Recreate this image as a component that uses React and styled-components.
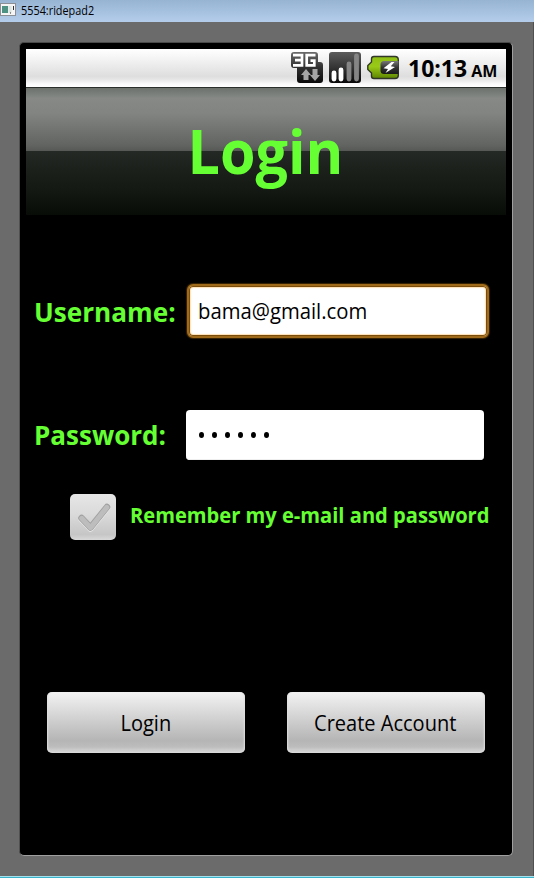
import React from 'react';
import styled, { createGlobalStyle } from 'styled-components';

const Global = createGlobalStyle`
  * { box-sizing: border-box; }
  body { margin: 0; background: #6b6b6b; font-family: "Open Sans", sans-serif; }
`;

const Window = styled.div`
  width: 534px;
  height: 878px;
  display: flex;
  flex-direction: column;
  background: #6b6b6b;
  overflow: hidden;
`;

const TitleBar = styled.header`
  height: 22px;
  flex: none;
  display: flex;
  align-items: flex-start;
  gap: 5px;
  background: linear-gradient(#98b4d3, #a8c3e2 60%, #b4cdea);
`;

const Desk = styled.div`
  height: 854px;
  flex: none;
  padding: 20px 20px 0 19px;
  border-right: 1px solid #505050;
`;

const BottomEdge = styled.div`
  height: 2px;
  background: linear-gradient(#a5e2ee 50%, #3bb3cb 50%);
`;

const Device = styled.main`
  height: 814px;
  padding: 6px;
  background: #000;
  border: 1px solid #a0a0a0;
  border-top-color: #4a4a4a;
  border-left-color: #505050;
  border-radius: 5px;
`;

/* Condensed line of text; $x is the horizontal scale. */
const Text = styled.span`
  display: block;
  white-space: pre;
  font-size: ${p => p.$size}px;
  font-weight: ${p => (p.$bold ? 700 : 400)};
  line-height: ${p => p.$line || 30}px;
  color: ${p => p.$color || '#000'};
  transform: scaleX(${p => p.$x || 1});
  transform-origin: ${p => p.$origin || 'left'} center;
`;

const StatusBar = styled.div`
  height: 39px;
  display: flex;
  align-items: center;
  padding: 0 9px 0 265px;
  border-bottom: 1px solid #2b2f2b;
  background: linear-gradient(#fff, #f4f4f4 25%, #dedede 72%, #e6e6e6 80%, #fafafa 92%, #fff);
`;

const StatusIcon = styled.svg`
  width: ${p => p.$w}px;
  height: 34px;
  flex: none;
  margin-right: ${p => p.$gap}px;
`;

const Clock = styled.div`
  display: flex;
  align-items: baseline;
  gap: 4px;
  padding-top: 2px;
`;

const Banner = styled.div`
  height: 127px;
  display: flex;
  justify-content: center;
  padding: 21px 1px 0 0;
  background:
    linear-gradient(#6c716c, #868986 8%, #818481 20%, #626462 45%, #565856 49.6%, transparent 49.6%),
    linear-gradient(#252925 49.6%, #1b201b 65%, #131813 82%, #070c07);
`;

const Field = styled.div`
  height: ${p => p.$h}px;
  margin: ${p => p.$m};
  display: grid;
  grid-template-columns: 151px 1fr;
  align-items: start;
`;

const Label = styled.label`
  padding-top: ${p => p.$top}px;
`;

const Input = styled.div`
  width: ${p => (p.$focus ? 302 : 298)}px;
  height: ${p => (p.$focus ? 54 : 50)}px;
  margin-left: ${p => (p.$focus ? 2 : 1)}px;
  display: flex;
  align-items: ${p => (p.$focus ? 'flex-start' : 'center')};
  padding: ${p => (p.$focus ? '9px 0 0 9px' : '0 0 0 13px')};
  background: #fff;
  border: ${p => (p.$focus ? '2px solid #a06b1a' : '0')};
  border-radius: ${p => (p.$focus ? 6 : 4)}px;
  box-shadow: ${p => (p.$focus
    ? 'inset 0 0 0 1px #7a4d0c, inset 0 0 1px 2px #ffe0b4, 0 0 1px 1px #3a2505'
    : 'inset 0 -1px 0 #eee')};
`;

const Dots = styled.div`
  display: flex;
  gap: 8px;
`;

const Dot = styled.i`
  width: 5px;
  height: 6px;
  border-radius: 50%;
  background: #000;
`;

const Remember = styled.div`
  display: flex;
  gap: 14px;
  margin: 34px 0 0 44px;
`;

const CheckBox = styled.div`
  width: 46px;
  height: 46px;
  flex: none;
  border-radius: 5px;
  background: linear-gradient(#e6e6e6, #dadada 45%, #c6c6c6 88%, #d8d8d8);
`;

const Actions = styled.div`
  display: flex;
  gap: 42px;
  margin: 152px 0 0 21px;
`;

const Button = styled.button`
  width: 198px;
  height: 61px;
  display: flex;
  align-items: center;
  justify-content: center;
  padding: 0 1px 2px 0;
  border: 0;
  border-radius: 5px;
  font-family: inherit;
  background: linear-gradient(#f3f3f3, #ebebeb 10%, #d0d0d0 45%, #bebebe 68%, #b5b5b5 80%, #bdbdbd 90%, #d2d2d2 97%, #dadada);
  box-shadow: inset 2px 0 2px -1px #e0e0e0, inset -2px 0 2px -1px #e0e0e0;
`;

const GREEN = '#66ff33';

const AppIcon = () => (
  <svg width="16" height="17" viewBox="0 0 16 17">
    <rect x="0.5" y="3.5" width="15" height="12" fill="#f5f5f5" stroke="#8b8f96" />
    <rect x="2" y="6" width="6" height="7" fill="#4d9282" />
    <rect x="8.5" y="6" width="3" height="7" fill="#d9e6e2" />
    <path d="M13.5 6v4M10 13h1" stroke="#333" />
  </svg>
);

const Network = () => (
  <StatusIcon $w={32} $gap={6} viewBox="0 0 32 34">
    <defs>
      <linearGradient id="net" x1="0" y1="0" x2="0" y2="1">
        <stop offset="0" stopColor="#6a6a6a" /><stop offset=".5" stopColor="#303030" /><stop offset="1" stopColor="#090909" />
      </linearGradient>
    </defs>
    <path d="M3 1H24Q27 1 27 4V11H29Q32 11 32 14V29Q32 32 29 32H9Q6 32 6 29V17H3Q0 17 0 14V4Q0 1 3 1Z" fill="url(#net)" />
    <path d="M2 4.2H11V14.3H2M4 9.2H11M24.5 4.2H15.7V14.3H23.3V9.7H19.5" fill="none" stroke="#fff" strokeWidth="2.7" />
    <path d="M15 18L20 24H17.5V29H12.5V24H10Z" fill="#a5a5a5" />
    <path d="M24 30L19 24H21.5V18H26.5V24H29Z" fill="#a5a5a5" />
  </StatusIcon>
);

const Signal = () => (
  <StatusIcon $w={32} $gap={6} viewBox="0 0 32 34">
    <defs>
      <linearGradient id="sig" x1="0" y1="0" x2="0" y2="1">
        <stop offset="0" stopColor="#5c5c5c" /><stop offset=".5" stopColor="#343434" /><stop offset="1" stopColor="#080808" />
      </linearGradient>
    </defs>
    <rect y="1" width="32" height="31" rx="3" fill="url(#sig)" />
    <g strokeWidth="4.8" strokeLinecap="round">
      <path d="M5 22V28M12 19V28" stroke="#fff" />
      <path d="M20 13V28M27.5 5V28" stroke="#858585" />
    </g>
  </StatusIcon>
);

const Battery = () => (
  <StatusIcon $w={32} $gap={9} viewBox="0 0 32 34">
    <defs>
      <linearGradient id="bat" x1="0" y1="0" x2="0" y2="1">
        <stop offset="0" stopColor="#8dbd12" /><stop offset=".45" stopColor="#9aca18" /><stop offset="1" stopColor="#5e8600" />
      </linearGradient>
      <linearGradient id="cell" x1="0" y1="0" x2="0" y2="1">
        <stop offset="0" stopColor="#777" /><stop offset=".5" stopColor="#333" /><stop offset="1" stopColor="#1a1a1a" />
      </linearGradient>
    </defs>
    <path d="M7 5.5H28Q31.3 5.5 31.3 9V24.5Q31.3 27.5 28 27.5H7Q4.5 27.5 4.5 25V22L.8 18.5V14.5L4.5 11V8Q4.5 5.5 7 5.5Z" fill="url(#bat)" stroke="#303728" strokeWidth="1.4" />
    <path d="M17 10H31.5V23H17Q13.5 23 13.5 19.5V13.5Q13.5 10 17 10Z" fill="url(#cell)" />
    <path d="M24.5 11L16.5 17.3L21 18L18.5 22L28 16L23.8 15.3L27.5 11Z" fill="#fff" />
  </StatusIcon>
);

const Check = () => (
  <svg width="46" height="46" viewBox="0 0 46 46">
    <g fill="none" strokeLinecap="round" strokeLinejoin="round">
      <path d="M11.5 25L20.5 34.5L37 14" stroke="#e8e8e8" strokeWidth="6.5" />
      <path d="M11.5 24L20.5 33.5L37 13" stroke="#a0a0a0" strokeWidth="6.5" />
      <path d="M11.7 24.3L20.5 33.7L36.8 13.4" stroke="#bdbdbd" strokeWidth="5" />
    </g>
  </svg>
);

export default function App() {
  return (
    <>
      <Global />
      <Window>
        <TitleBar>
          <AppIcon />
          <Text $size={12} $line={21} $x={0.905}>5554:ridepad2</Text>
        </TitleBar>
        <Desk>
          <Device>
            <StatusBar>
              <Network />
              <Signal />
              <Battery />
              <Clock>
                <Text $size={23} $bold>10:13</Text>
                <Text $size={16} $bold>AM</Text>
              </Clock>
            </StatusBar>
            <Banner>
              <Text $size={61.5} $bold $line={82} $x={0.935} $origin="center" $color={GREEN}>Login</Text>
            </Banner>
            <Field $h={126} $m="69px 0 0 8px">
              <Label $top={13}><Text $size={27} $bold $x={0.968} $color={GREEN}>Username:</Text></Label>
              <Input $focus><Text $size={22} $x={0.922}>bama@gmail.com</Text></Input>
            </Field>
            <Field $h={50} $m="0 0 0 8px">
              <Label $top={10}><Text $size={27} $bold $x={0.963} $color={GREEN}>Password:</Text></Label>
              <Input>
                <Dots>{Array.from({ length: 6 }, (_, i) => <Dot key={i} />)}</Dots>
              </Input>
            </Field>
            <Remember>
              <CheckBox><Check /></CheckBox>
              <Text $size={21} $bold $line={42} $x={0.958} $color={GREEN}>Remember my e-mail and password</Text>
            </Remember>
            <Actions>
              <Button><Text $size={22} $x={0.91} $origin="center">Login</Text></Button>
              <Button><Text $size={22} $x={0.91} $origin="center">Create Account</Text></Button>
            </Actions>
          </Device>
        </Desk>
        <BottomEdge />
      </Window>
    </>
  );
}
